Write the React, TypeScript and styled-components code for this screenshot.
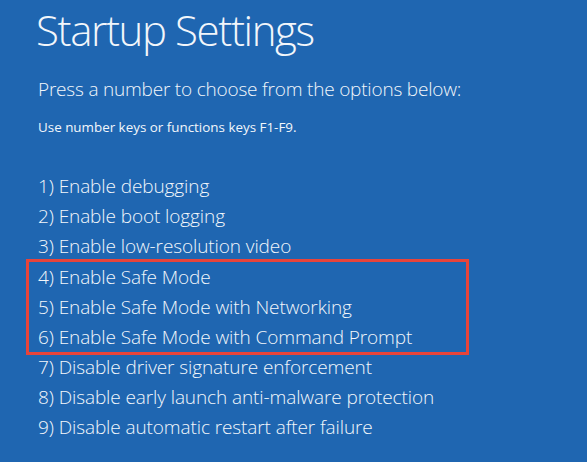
import React from "react";
import styled, { createGlobalStyle } from "styled-components";

const GlobalStyle = createGlobalStyle`
  html, body {
    margin: 0;
    padding: 0;
    background: #1f66b1;
  }
`;

const Screen = styled.div`
  width: 587px;
  height: 462px;
  box-sizing: border-box;
  overflow: hidden;
  background: #1f66b1;
  color: #f2f6fb;
  font-family: "Open Sans", "Noto Sans", sans-serif;
  padding: 0 0 0 36px;
  display: flex;
  flex-direction: column;
`;

const Title = styled.h1`
  margin: 0;
  font-weight: 300;
  font-size: 42px;
  line-height: 60px;
  letter-spacing: -1.4px;
`;

const Lead = styled.p`
  margin: 14px 0 0 2px;
  font-weight: 300;
  font-size: 19px;
  line-height: 30px;
  letter-spacing: -0.2px;
`;

const Hint = styled.p`
  margin: 13px 0 0 2px;
  font-weight: 400;
  font-size: 13.4px;
  line-height: 20px;
`;

const Options = styled.ol`
  list-style: none;
  margin: 34px 0 0 2px;
  padding: 0;
  display: flex;
  flex-direction: column;
`;

const Option = styled.li`
  font-weight: 300;
  font-size: 19px;
  line-height: 30px;
  letter-spacing: -0.1px;
  white-space: nowrap;
`;

const Highlight = styled.div`
  width: 443px;
  box-sizing: border-box;
  border: 3px solid #e8443a;
  margin: -2px 0 -3px -12px;
  padding: 0 0 0 9px;
  display: flex;
  flex-direction: column;
`;

const before = [
  "1) Enable debugging",
  "2) Enable boot logging",
  "3) Enable low-resolution video",
];
const safe = [
  "4) Enable Safe Mode",
  "5) Enable Safe Mode with Networking",
  "6) Enable Safe Mode with Command Prompt",
];
const after = [
  "7) Disable driver signature enforcement",
  "8) Disable early launch anti-malware protection",
  "9) Disable automatic restart after failure",
];

export default function App() {
  return (
    <>
      <GlobalStyle />
      <Screen>
        <Title>Startup Settings</Title>
        <Lead>Press a number to choose from the options below:</Lead>
        <Hint>Use number keys or functions keys F1-F9.</Hint>
        <Options>
          {before.map((t) => (
            <Option key={t}>{t}</Option>
          ))}
          <Highlight>
            {safe.map((t) => (
              <Option key={t}>{t}</Option>
            ))}
          </Highlight>
          {after.map((t) => (
            <Option key={t}>{t}</Option>
          ))}
        </Options>
      </Screen>
    </>
  );
}
